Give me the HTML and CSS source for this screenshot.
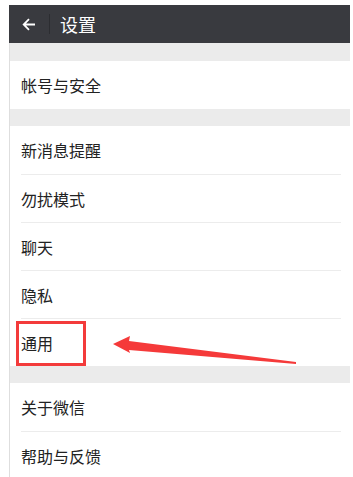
FILE: index.html
```html
<!DOCTYPE html>
<html lang="zh-CN">
<head>
<meta charset="utf-8">
<link rel="stylesheet" href="styles.css">
</head>
<body>
<div class="screen">
  <header class="topbar">
    <span class="back">
      <svg width="14" height="13" viewBox="0 0 14 13"><path d="M13 6.5H2 M7 1.2L1.7 6.5L7 11.8" fill="none" stroke="#fff" stroke-width="1.8"/></svg>
    </span>
    <span class="divider"></span>
    <span class="title">设置</span>
  </header>
  <main class="content">
    <div class="gap"></div>
    <div class="group">
      <div class="row">帐号与安全</div>
    </div>
    <div class="gap"></div>
    <div class="group">
      <div class="row">新消息提醒</div>
      <div class="row">勿扰模式</div>
      <div class="row">聊天</div>
      <div class="row">隐私</div>
      <div class="row">通用</div>
    </div>
    <div class="gap"></div>
    <div class="group">
      <div class="row">关于微信</div>
      <div class="row">帮助与反馈</div>
    </div>
  </main>
</div>
<div class="mark-box"></div>
<svg class="mark-arrow" width="353" height="477" viewBox="0 0 353 477">
  <polygon points="113,344 130,336 129,341 296,362 296,364 129,350 130,353" fill="#f53a3a"/>
</svg>
</body>
</html>
```
FILE: styles.css
```css
html, body {
  margin: 0;
  padding: 0;
  background: #fff;
}
body {
  width: 353px;
  height: 477px;
  overflow: hidden;
  position: relative;
  font-family: "Noto Sans CJK SC", "Noto Sans", sans-serif;
}
.screen {
  margin: 5px 3px 0 9px;
}
.topbar {
  height: 38px;
  background: #393a3f;
  display: flex;
  align-items: center;
}
.back {
  width: 14px;
  height: 13px;
  margin-left: 13px;
  display: flex;
}
.divider {
  width: 1px;
  height: 20px;
  background: #2c2d31;
  margin-left: 13px;
}
.title {
  color: #fff;
  font-size: 18px;
  margin-left: 10px;
  line-height: 38px;
}
.content {
  border-left: 1px solid #dedede;
  height: 440px;
  overflow: hidden;
}
.gap {
  height: 17px;
  background: #ebebeb;
}
.content > .gap:first-child {
  height: 18px;
}
.group {
  background: #fff;
}
.row {
  height: 48px;
  line-height: 48px;
  font-size: 16px;
  color: #222;
  margin: 0 9px 0 11px;
  border-top: 1px solid #ececec;
  box-sizing: border-box;
}
.row:first-child {
  border-top: none;
}
.mark-box {
  position: absolute;
  left: 16px;
  top: 321px;
  width: 64px;
  height: 39px;
  border: 3px solid #f33b3b;
}
.mark-arrow {
  position: absolute;
  left: 0;
  top: 0;
}
```
